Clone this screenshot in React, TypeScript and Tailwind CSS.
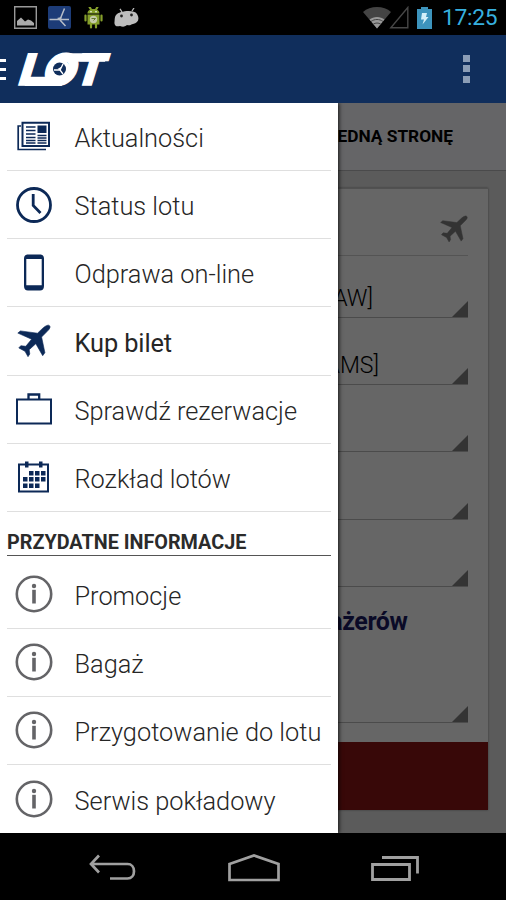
import type { ReactNode } from 'react';

type MenuItem = {
  label: string;
  icon: ReactNode;
  active?: boolean;
};

const PLANE_PATH =
  'M30.5 .8C32 .1 33.6 1.7 32.9 3.3 32.4 4.7 31.3 5.8 30 7.1L24.6 12.5 27.9 28.2 25.7 31.2 18.8 19.2 12.2 25.2 12.8 29.5 11 32.2 8 26.8 1.8 23.4 3.8 21.2 8.8 21.8 14.6 14.7 .8 8.6 3.4 6.4 20.5 8.7 26.3 3.2C27.6 2 29 1.3 30.5 .8Z';

function NewsIcon() {
  return (
    <svg width="34" height="30" viewBox="0 0 34 30" fill="none" stroke="#0c2957">
      <path d="M5.5 1.8H32V25H5.5Z" strokeWidth="2" />
      <path d="M4 5H1.2V28.5H29" strokeWidth="1.7" />
      <path d="M9 6H18.5M9 9.5H18.5M9 13H18.5M9 16.5H18.5M9 19.5H18.5M9 22H18.5M20.5 14.5H29.5M20.5 17H29.5M20.5 19.5H29.5M20.5 22H29.5" strokeWidth="1.3" />
      <path d="M20.5 4.5H29.5V12H20.5Z" fill="#0c2957" stroke="none" />
    </svg>
  );
}

function ClockIcon() {
  return (
    <svg width="36" height="36" viewBox="0 0 36 36" fill="none" stroke="#0c2957">
      <circle cx="18" cy="18" r="16.5" strokeWidth="2.8" />
      <path d="M17.2 7V18.5L24.5 26" strokeWidth="2.8" />
    </svg>
  );
}

function PhoneIcon() {
  return (
    <svg width="20" height="37" viewBox="0 0 20 37">
      <path
        fill="#0c2957"
        fillRule="evenodd"
        d="M4 .5H16C18.5 .5 20 2 20 4.5V32C20 35 18.5 36.5 16 36.5H4C1.5 36.5 0 35 0 32V4.5C0 2 1.5 .5 4 .5ZM2.3 5V31.2H17.7V5Z"
      />
    </svg>
  );
}

function PlaneIcon({ size, color }: { size: number; color: string }) {
  return (
    <svg width={size} height={size} viewBox="0 0 34 33">
      <path d={PLANE_PATH} fill={color} stroke={color} strokeWidth=".6" />
    </svg>
  );
}

function CaseIcon() {
  return (
    <svg width="36" height="32" viewBox="0 0 36 32" fill="none" stroke="#0c2957" strokeWidth="2">
      <path d="M1 6.5H35V30.5H1Z" />
      <path d="M12.5 6.5V1.5H23.2V6.5" strokeWidth="2.3" />
    </svg>
  );
}

function CalendarIcon() {
  const cells = [
    [11, 10], [17, 10], [23, 10],
    [5, 16], [11, 16], [17, 16], [23, 16],
    [5, 22.5], [11, 22.5], [17, 22.5],
  ];
  return (
    <svg width="31" height="32" viewBox="0 0 31 32">
      <path d="M1 3.5H30V30.5H1Z" fill="none" stroke="#0c2957" strokeWidth="2" />
      <path d="M7 .5H10.5V6.5H7ZM21 .5H24.5V6.5H21Z" fill="#0c2957" />
      {cells.map(([x, y]) => (
        <rect key={`${x}-${y}`} x={x} y={y} width="4.5" height="4.5" fill="#0c2957" />
      ))}
    </svg>
  );
}

function InfoIcon() {
  return (
    <svg width="38" height="38" viewBox="0 0 38 38">
      <circle cx="19" cy="19" r="17.2" fill="none" stroke="#646467" strokeWidth="2.6" />
      <circle cx="19" cy="11" r="2.2" fill="#646467" />
      <path d="M17.2 14.8H20.8V28.5H17.2Z" fill="#646467" />
    </svg>
  );
}

function LotLogo() {
  return (
    <svg width="100" height="56" viewBox="0 -10 100 56">
      <g transform="translate(5.5 0.8) skewX(-8)">
        <text
          x="2"
          y="33.5"
          fill="#fff"
          stroke="#fff"
          strokeWidth="1.4"
          fontFamily="Inter, sans-serif"
          fontWeight="900"
          fontStyle="italic"
          fontSize="43"
          textLength="85"
          lengthAdjust="spacingAndGlyphs"
        >
          LOT
        </text>
        {/* bars that join the three letters */}
        <rect x="8" y="25" width="37" height="9.2" fill="#fff" />
        <rect x="45" y="1.5" width="40" height="8.5" fill="#fff" />
      </g>
      <circle cx="43.5" cy="18" r="10.5" fill="#fff" />
      <circle cx="43.5" cy="18" r="6.5" fill="#102e5c" />
      <path d="M38 19H44L47 13M44 19L47 23" stroke="#fff" strokeWidth="1.3" fill="none" />
      <path d="M41.5 18L45 16V20Z" fill="#fff" />
    </svg>
  );
}

const mainItems: MenuItem[] = [
  { label: 'Aktualności', icon: <NewsIcon /> },
  { label: 'Status lotu', icon: <ClockIcon /> },
  { label: 'Odprawa on-line', icon: <PhoneIcon /> },
  { label: 'Kup bilet', icon: <PlaneIcon size={34} color="#0c2957" />, active: true },
  { label: 'Sprawdź rezerwacje', icon: <CaseIcon /> },
  { label: 'Rozkład lotów', icon: <CalendarIcon /> },
];

const infoItems: MenuItem[] = [
  { label: 'Promocje', icon: <InfoIcon /> },
  { label: 'Bagaż', icon: <InfoIcon /> },
  { label: 'Przygotowanie do lotu', icon: <InfoIcon /> },
  { label: 'Serwis pokładowy', icon: <InfoIcon /> },
];

function StatusBar() {
  return (
    <div className="flex h-[35px] shrink-0 items-center justify-between bg-black pl-3.5 pr-2">
      <div className="flex items-center">
        <svg width="23" height="23" viewBox="0 0 23 23">
          <path d="M.7 .7H22.3V22.3H.7Z" fill="none" stroke="#999" strokeWidth="1.4" />
          <path d="M3 19.5V15L7 11.5 11 15.5 14 13.5 17 14.5 20 17V19.5Z" fill="#aaa" />
        </svg>
        <svg className="ml-[11px]" width="23" height="23" viewBox="0 0 23 23">
          <rect width="23" height="23" rx="2" fill="#1d3c78" />
          <path d="M1.5 13.5H12L16.5 2.5M12 14L17.5 20M12 13.5H21" fill="none" stroke="#b8bec8" strokeWidth="1.5" />
          <path d="M9 12L13.5 11 13 15Z" fill="#b8bec8" />
        </svg>
        <svg className="ml-[13px]" width="19" height="22" viewBox="0 0 19 22" fill="#86a02b">
          <path d="M3.5 6.5C3.5 3.5 6 2 9.5 2S15.5 3.5 15.5 6.5ZM3.5 7.5H15.5V17.5H3.5Z" />
          <path d="M5.5 0L7 2.5M13.5 0L12 2.5M1.5 8.5V13.5M17.5 8.5V13.5M7 17V20.5M12 17V20.5" stroke="#86a02b" strokeWidth="2.2" strokeLinecap="round" />
          <circle cx="7" cy="4.7" r=".8" fill="#fff" />
          <circle cx="12" cy="4.7" r=".8" fill="#fff" />
          <circle cx="9.5" cy="12.5" r="3.7" fill="#c5cba9" />
          <path d="M7.5 11.5H11.5L9.5 13.5" fill="none" stroke="#65782e" />
        </svg>
        <svg className="ml-[11px]" width="25" height="20" viewBox="0 0 25 20">
          <path d="M6 .8L8 4M20 0L18 3" stroke="#bbb" strokeWidth="1.3" />
          <path d="M2 7C5 3 20 1 23 6C26 11 24 15 19 16C17 16.5 16 18 13 17C10 19.5 8 18.5 6 18C2 19 0 17 .5 14C.8 11 .5 9 2 7Z" fill="#bdbdbd" />
          <circle cx="7.5" cy="8" r="1.4" fill="#222" />
          <circle cx="17.5" cy="7" r="1.4" fill="#222" />
        </svg>
      </div>
      <div className="flex items-center">
        <svg width="28" height="22" viewBox="0 0 28 22">
          <path d="M0 5C7-1.6 21-1.6 28 5L14 21.5Z" fill="#444" />
          <path d="M6.5 12.5C10.5 9 17.5 9 21.5 12.5L14 21.5Z" fill="#999" />
          <path d="M8 14.5C11.5 11.8 16.5 11.8 20 14.5M10.2 17.2C12.5 15.6 15.5 15.6 17.8 17.2" fill="none" stroke="#444" />
        </svg>
        <svg className="-ml-0.5" width="20" height="23" viewBox="0 0 20 23">
          <path d="M1.8 21.8H18.8V1.5Z" fill="none" stroke="#474747" strokeWidth="1.4" />
        </svg>
        <svg className="ml-2" width="15" height="22" viewBox="0 0 15 22">
          <path d="M4 0H11V2H15V22H0V2H4Z" fill="#3d94bd" />
          <path d="M5 6H10L9 10H11.5L5.5 17.5 7 12.5H4Z" fill="#d5f0fa" />
        </svg>
        <span className="ml-[10px] w-14 whitespace-nowrap pt-px text-[22.8px] leading-[34px] tracking-[-0.3px] text-[#37b0df]">17:25</span>
      </div>
    </div>
  );
}

function MenuRow({ item, last }: { item: MenuItem; last?: boolean }) {
  return (
    <li className={`flex h-[68.2px] items-center ${last ? '' : 'border-b border-[#dfdfdf]'}`}>
      <span className="flex w-[53px] shrink-0 justify-center">{item.icon}</span>
      <span
        className={`ml-[14.5px] whitespace-nowrap pt-[3px] text-[25.35px] leading-8 text-[#262626] ${
          item.active ? 'font-normal tracking-[-0.1px]' : 'font-light'
        }`}
      >
        {item.label}
      </span>
    </li>
  );
}

function Drawer() {
  return (
    <nav className="absolute inset-y-0 left-0 w-[338px] bg-white px-[7px] pt-[0.4px] shadow-[1px_0_4px_rgba(0,0,0,0.8)]">
      <ul>
        {mainItems.map((item) => (
          <MenuRow key={item.label} item={item} />
        ))}
      </ul>
      <h2 className="flex h-[43.5px] items-end border-b-[1.5px] border-[#555] text-[19.8px] font-bold leading-[25px] text-[#2b2b2b]">
        PRZYDATNE INFORMACJE
      </h2>
      <ul className="pt-[5px]">
        {infoItems.map((item, i) => (
          <MenuRow key={item.label} item={item} last={i === infoItems.length - 1} />
        ))}
      </ul>
    </nav>
  );
}

function Spinner({ className, children }: { className: string; children?: ReactNode }) {
  return (
    <div className={`flex items-end justify-end border-b border-[#4b4b4b] ${className}`}>
      {children}
      <svg width="16" height="16" viewBox="0 0 16 16">
        <path d="M16 0V16H0Z" fill="#343434" />
      </svg>
    </div>
  );
}

function BookingForm() {
  return (
    <main className="flex h-full flex-col bg-[#5b5b5b]">
      <div className="flex h-[68px] shrink-0 items-center justify-end border-b border-[#4a4a4b] bg-[#656567] pr-[53px] pt-0.5 text-[17.3px] font-bold text-black">
        EDNĄ STRONĘ
      </div>
      <div className="ml-[18px] mr-[18.5px] mt-[17px] flex h-[622px] flex-col border-t border-[#515151] bg-[#666] shadow-[0_0_2px_rgba(0,0,0,0.4)]">
        <div className="ml-5 mr-[19.5px] flex h-[67px] items-center justify-end border-b border-[#545454] pt-3.5">
          <PlaneIcon size={28} color="#333" />
        </div>
        <div className="ml-5 mr-[19.5px] text-[23px] font-light text-black">
          <Spinner className="h-[62px]">
            <span className="mr-[79px] leading-[36px]">AW]</span>
          </Spinner>
          <Spinner className="h-[67px]">
            <span className="mr-[73px] leading-[36px]">AMS]</span>
          </Spinner>
          <Spinner className="h-[67.5px]" />
          <Spinner className="h-[67.5px]" />
          <Spinner className="h-[67.5px]" />
        </div>
        <p className="mr-[80px] pt-[19px] text-right text-[25px] font-bold leading-8 tracking-[-0.4px] text-[#0a0a27]">ażerów</p>
        <Spinner className="ml-5 mr-[19.5px] h-[84.5px]" />
        <div className="mt-auto h-[68px] bg-[#380808]" />
      </div>
    </main>
  );
}

function NavBar() {
  return (
    <div className="flex h-[68px] items-center justify-between bg-black pl-[88px] pr-[87px] pt-1">
      <svg width="48" height="28" viewBox="0 0 48 28" fill="none" stroke="#a0a0a0" strokeWidth="2.7">
        <path d="M11 1.5L3 10L11 18.5M3 10H39.5C43.5 10 46 13 46 17.2S43.5 24.5 39.5 24.5H22" />
      </svg>
      <svg width="52" height="28" viewBox="0 0 52 28" fill="none" stroke="#a0a0a0" strokeWidth="2.7">
        <path d="M1.5 10L26 1.5L50.5 10V26H1.5Z" />
      </svg>
      <svg width="48" height="28" viewBox="0 0 48 28" fill="none" stroke="#a0a0a0" strokeWidth="2.8">
        <path d="M1.5 10.5H38.5V25.5H1.5Z" />
        <path d="M11 3.5H46.5V19.5" />
      </svg>
    </div>
  );
}

export default function App() {
  return (
    <div className="flex h-[900px] w-[506px] flex-col overflow-hidden bg-black font-['Roboto',sans-serif]">
      <StatusBar />
      <header className="flex h-[67.5px] shrink-0 items-center bg-[#102e5c]">
        <div className="flex w-1.5 flex-col gap-[6px] pt-0.5">
          <div className="h-[3px] bg-white" />
          <div className="h-[3px] bg-white" />
          <div className="h-[3px] bg-white" />
        </div>
        <div className="ml-[10px]">
          <LotLogo />
        </div>
        <div className="ml-auto mr-9 flex flex-col gap-[3.5px]">
          <div className="h-[7px] w-[7px] bg-[#8b9db6]" />
          <div className="h-[7px] w-[7px] bg-[#8b9db6]" />
          <div className="h-[7px] w-[7px] bg-[#8b9db6]" />
        </div>
      </header>
      <div className="relative h-[730px] shrink-0 overflow-hidden">
        <BookingForm />
        <Drawer />
      </div>
      <NavBar />
    </div>
  );
}
